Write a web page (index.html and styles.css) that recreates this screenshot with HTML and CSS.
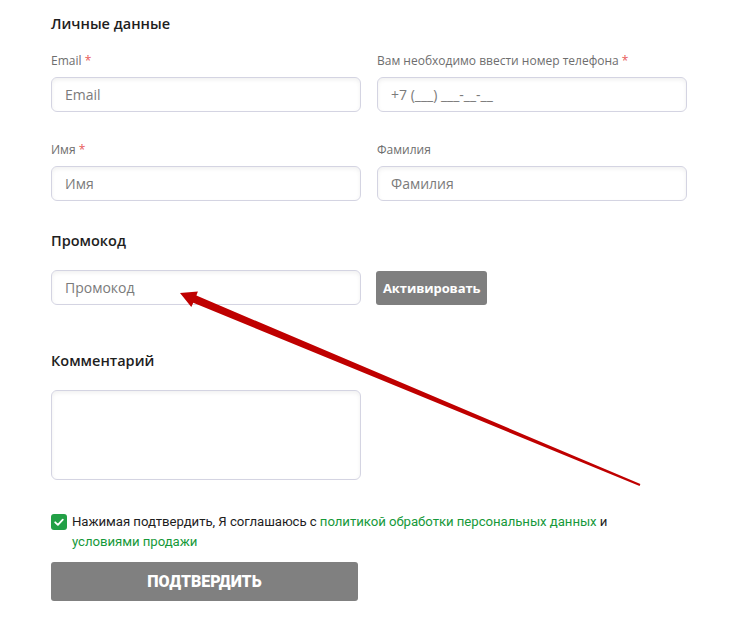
FILE: index.html
```html
<!DOCTYPE html>
<html lang="ru">
<head>
<meta charset="utf-8">
<title>Личные данные</title>
<link rel="stylesheet" href="styles.css">
</head>
<body>
<div class="page">
  <form class="form">
    <h2 class="section-title first">Личные данные</h2>
    <div class="grid">
      <div class="field">
        <label class="label">Email <span class="req">*</span></label>
        <input class="input" type="text" placeholder="Email">
      </div>
      <div class="field">
        <label class="label">Вам необходимо ввести номер телефона <span class="req">*</span></label>
        <input class="input" type="text" placeholder="+7 (___) ___-__-__">
      </div>
      <div class="field">
        <label class="label">Имя <span class="req">*</span></label>
        <input class="input" type="text" placeholder="Имя">
      </div>
      <div class="field">
        <label class="label">Фамилия</label>
        <input class="input" type="text" placeholder="Фамилия">
      </div>
    </div>

    <h2 class="section-title">Промокод</h2>
    <div class="promo-row">
      <input class="input" type="text" placeholder="Промокод">
      <button class="btn-activate" type="button">Активировать</button>
    </div>

    <h2 class="section-title comment-title">Комментарий</h2>
    <textarea class="textarea"></textarea>

    <div class="agree">
      <span class="checkbox">
        <svg viewBox="0 0 16 16" width="16" height="16"><path d="M4.2 8.3 L6.9 10.9 L11.8 5.6" fill="none" stroke="#fff" stroke-width="1.8" stroke-linecap="round" stroke-linejoin="round"/></svg>
      </span>
      <p class="agree-text">Нажимая подтвердить, Я соглашаюсь с <a class="link" href="#">политикой обработки персональных данных</a> и <a class="link" href="#">условиями продажи</a></p>
    </div>

    <button class="btn-submit" type="button">ПОДТВЕРДИТЬ</button>
  </form>

  <svg class="arrow" width="752" height="629" viewBox="0 0 752 629">
    <polygon points="180,293 197.9,291.4 196.4,295.6 640.4,484.1 639.6,485.9 193.3,302.8 191.3,307" fill="#bf0000"/>
  </svg>
</div>
</body>
</html>
```

FILE: styles.css
```css
html, body {
  margin: 0;
  padding: 0;
  background: #fff;
}

.page {
  position: relative;
  width: 752px;
  height: 629px;
  overflow: hidden;
}

.form {
  padding: 14px 0 0 51px;
  font-family: "Open Sans", "Noto Sans", sans-serif;
}

.section-title {
  margin: 30px 0 19px;
  font-size: 14.5px;
  line-height: 20px;
  font-weight: 600;
  color: #1e1e1e;
}

.section-title.first {
  margin-top: 0;
}

.section-title.comment-title {
  margin-top: 46px;
  margin-bottom: 19px;
}

.grid {
  display: grid;
  grid-template-columns: 310px 310px;
  column-gap: 16px;
  row-gap: 30px;
}

.field {
  display: flex;
  flex-direction: column;
}

.label {
  font-size: 12px;
  line-height: 16px;
  color: #6e6e6e;
  margin-bottom: 8px;
}

.req {
  color: #e8595a;
}

.input {
  box-sizing: border-box;
  width: 310px;
  height: 35px;
  margin: 0;
  padding: 0 13px;
  border: 1px solid #d4d4e2;
  border-radius: 6px;
  box-shadow: inset 0 2px 4px rgba(0, 0, 0, 0.06);
  background: #fff;
  font-family: "Open Sans", "Noto Sans", sans-serif;
  font-size: 14px;
  color: #333;
  outline: none;
}

.input::placeholder {
  color: #7b7b7b;
}

.promo-row {
  display: flex;
  align-items: center;
  gap: 15px;
}

.btn-activate {
  height: 34px;
  padding: 0 7px;
  border: none;
  border-radius: 3px;
  background: #7f7f7f;
  color: #fff;
  font-family: "Open Sans", "Noto Sans", sans-serif;
  font-size: 13px;
  font-weight: 700;
  letter-spacing: -0.1px;
  cursor: pointer;
}

.textarea {
  display: block;
  box-sizing: border-box;
  width: 310px;
  height: 90px;
  margin: 0;
  border: 1px solid #d4d4e2;
  border-radius: 6px;
  box-shadow: inset 0 2px 4px rgba(0, 0, 0, 0.06);
  resize: none;
  outline: none;
}

.agree {
  display: flex;
  align-items: flex-start;
  gap: 5px;
  margin-top: 32px;
  width: 600px;
}

.checkbox {
  flex: none;
  width: 16px;
  height: 16px;
  margin-top: 2px;
  border-radius: 3px;
  background: #22a046;
  display: flex;
}

.agree-text {
  margin: 0;
  font-family: Roboto, "Noto Sans", sans-serif;
  font-size: 13.2px;
  line-height: 20px;
  color: #1e1e1e;
  letter-spacing: -0.05px;
}

.link {
  color: #16993a;
  text-decoration: none;
}

.btn-submit {
  display: block;
  margin-top: 10px;
  width: 307px;
  height: 39px;
  border: none;
  border-radius: 3px;
  background: #808080;
  color: #fff;
  font-family: Roboto, "Noto Sans", sans-serif;
  font-size: 16px;
  font-weight: 900;
  cursor: pointer;
}

.arrow {
  position: absolute;
  left: 0;
  top: 0;
  pointer-events: none;
}
```
